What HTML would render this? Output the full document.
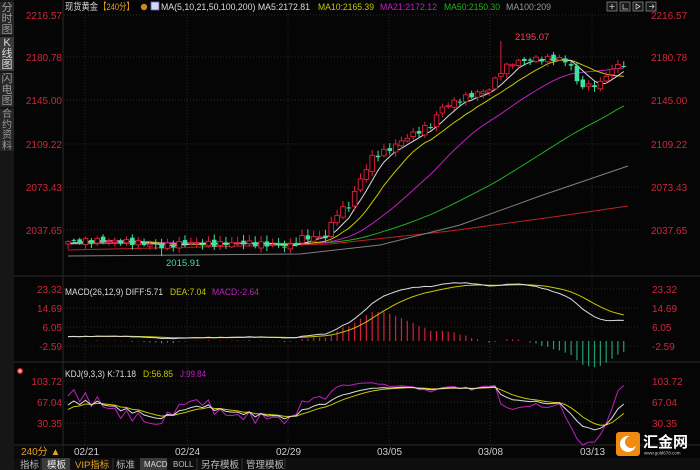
<!DOCTYPE html>
<html><head><meta charset="utf-8">
<style>
*{margin:0;padding:0;box-sizing:border-box}
body{width:700px;height:470px;background:#050505;overflow:hidden;font-family:"Liberation Sans","Noto Sans CJK SC",sans-serif;position:relative}
#side{position:absolute;left:0;top:0;width:14px;height:470px;background:#161616}
.tab{position:absolute;left:0;width:14px;color:#9a9a9a;font-size:11px;line-height:11px;text-align:center;background:#262626}
svg{position:absolute;left:0;top:0}
</style></head><body>
<div id="side">
<div class="tab" style="top:2px;height:33px;padding-top:1px">分<br>时<br>图</div>
<div class="tab" style="top:37px;height:34px;background:#3a3a3a;color:#ddd;padding-top:1px">K<br>线<br>图</div>
<div class="tab" style="top:73px;height:34px;padding-top:1px">闪<br>电<br>图</div>
<div class="tab" style="top:109px;height:42px;padding-top:1px;font-size:10px;line-height:10.5px">合<br>约<br>资<br>料</div>
</div>
<svg id="s" width="700" height="470" xmlns="http://www.w3.org/2000/svg" font-family="Liberation Sans, Noto Sans CJK SC, sans-serif">
<g id="grid" stroke="#262626" stroke-dasharray="1,2"></g>
<line x1="14" y1="276" x2="700" y2="276" stroke="#2a2a2a"/>
<line x1="14" y1="362" x2="700" y2="362" stroke="#2a2a2a"/>
<line x1="14" y1="445" x2="700" y2="445" stroke="#2a2a2a"/>
<line x1="63" y1="0" x2="63" y2="457" stroke="#2a2a2a"/>
<g id="plot"></g>
<g font-size="10" fill="#d0263a" text-anchor="end">
<text x="62" y="19">2216.57</text><text x="62" y="61">2180.78</text><text x="62" y="104">2145.00</text><text x="62" y="148">2109.22</text><text x="62" y="191">2073.43</text><text x="62" y="234">2037.65</text>
<text x="62" y="293">23.32</text><text x="62" y="312">14.69</text><text x="62" y="331">6.05</text><text x="62" y="350">-2.59</text>
<text x="62" y="385">103.72</text><text x="62" y="406">67.04</text><text x="62" y="427">30.35</text>
</g>
<g font-size="10" fill="#d0263a">
<text x="651" y="19">2216.57</text><text x="651" y="61">2180.78</text><text x="651" y="104">2145.00</text><text x="651" y="148">2109.22</text><text x="651" y="191">2073.43</text><text x="651" y="234">2037.65</text>
<text x="652" y="293">23.32</text><text x="652" y="312">14.69</text><text x="652" y="331">6.05</text><text x="652" y="350">-2.59</text>
<text x="652" y="385">103.72</text><text x="652" y="406">67.04</text><text x="652" y="427">30.35</text>
</g>
<g font-size="9.5" lengthAdjust="spacingAndGlyphs">
<text x="65" y="10" fill="#ddd" textLength="33" lengthAdjust="spacingAndGlyphs">现货黄金</text><text x="99" y="10" fill="#e8a020" textLength="35" lengthAdjust="spacingAndGlyphs">【240分】</text>
<circle cx="144" cy="7" r="3.2" fill="#c88a20"/>
<rect x="151" y="2" width="8" height="8" fill="#d8d8f0" stroke="#6060c0" stroke-width="0.8"/>
<text x="161" y="10" fill="#ddd" textLength="149" lengthAdjust="spacingAndGlyphs">MA(5,10,21,50,100,200) MA5:2172.81</text>
<text x="318" y="10" fill="#c8c800" textLength="56" lengthAdjust="spacingAndGlyphs">MA10:2165.39</text>
<text x="380" y="10" fill="#c020c0" textLength="57" lengthAdjust="spacingAndGlyphs">MA21:2172.12</text>
<text x="444" y="10" fill="#20b020" textLength="56" lengthAdjust="spacingAndGlyphs">MA50:2150.30</text>
<text x="506" y="10" fill="#999" textLength="45" lengthAdjust="spacingAndGlyphs">MA100:209</text>
<text x="65" y="295" fill="#ddd" textLength="98" lengthAdjust="spacingAndGlyphs">MACD(26,12,9) DIFF:5.71</text>
<text x="170" y="295" fill="#c8c800" textLength="36" lengthAdjust="spacingAndGlyphs">DEA:7.04</text>
<text x="212" y="295" fill="#c020c0" textLength="47" lengthAdjust="spacingAndGlyphs">MACD:-2.64</text>
<text x="65" y="377" fill="#ddd" textLength="71" lengthAdjust="spacingAndGlyphs">KDJ(9,3,3) K:71.18</text>
<text x="143" y="377" fill="#c8c800" textLength="30" lengthAdjust="spacingAndGlyphs">D:56.85</text>
<text x="180" y="377" fill="#c020c0" textLength="26" lengthAdjust="spacingAndGlyphs">J:99.84</text>
</g>
<g fill="#1a1a1a" stroke="#888" stroke-width="0.8">
<rect x="607" y="2" width="10" height="9"/><rect x="620" y="2" width="10" height="9"/><rect x="633" y="2" width="10" height="9"/><rect x="646" y="2" width="10" height="9"/>
</g>
<g stroke="#ccc" stroke-width="0.8" fill="none"><path d="M612 4v5M609.5 6.5h5M623 4v5h5M636 4v5l4-2.5zM649 6.5h5l-2-2M654 6.5l-2 2"/></g>
<circle cx="20" cy="371" r="3" fill="#e02020"/><path d="M20 369v4M18 371h4" stroke="#fff" stroke-width="0.8"/>
<g font-size="10" fill="#ccc">
<text x="74" y="455">02/21</text><text x="175" y="455">02/24</text><text x="276" y="455">02/29</text><text x="377" y="455">03/05</text><text x="478" y="455">03/08</text><text x="580" y="455">03/13</text>
</g>
<rect x="14" y="446" width="49" height="11" fill="#0a0a0a"/>
<text x="21" y="455" font-size="10" fill="#e8a020">240分 ▲</text>
<rect x="14" y="458" width="686" height="12" fill="#0e0e0e"/>
<rect x="42" y="458" width="28" height="12" fill="#3c3c3c"/>
<rect x="140" y="458" width="27" height="12" fill="#3c3c3c"/>
<g font-size="9.5" fill="#bbb">
<text x="20" y="468">指标</text><text x="47" y="468" fill="#eee">模板</text><text x="75" y="468" fill="#e8a020">VIP指标</text><text x="116" y="468">标准</text><text x="144" y="467" font-size="8" fill="#ddd">MACD</text><text x="173" y="467" font-size="8">BOLL</text><text x="201" y="468">另存模板</text><text x="246" y="468">管理模板</text>
</g>
<g stroke="#333"><line x1="41" y1="458" x2="41" y2="470"/><line x1="113" y1="458" x2="113" y2="470"/><line x1="197" y1="458" x2="197" y2="470"/><line x1="242" y1="458" x2="242" y2="470"/><line x1="285" y1="458" x2="285" y2="470"/></g>
<rect x="616" y="432" width="24" height="24" rx="3" fill="#f08a10"/>
<circle cx="628" cy="444" r="8" fill="#fff"/><circle cx="631" cy="442" r="6" fill="#f08a10"/>
<text x="643" y="447" font-size="15" fill="#fff" font-weight="bold">汇金网</text>
<text x="644" y="454.5" font-size="4.5" fill="#ccc">www.gold678.com</text>
</svg>
<script>
var NS="http://www.w3.org/2000/svg",plot=document.getElementById('plot'),grid=document.getElementById('grid');
function el(t,a,p){var e=document.createElementNS(NS,t);for(var k in a)e.setAttribute(k,a[k]);(p||plot).appendChild(e);return e;}
[15,57,100,144,187,230,289,308,327,346,381,402,423].forEach(function(y){el('line',{x1:64,y1:y,x2:640,y2:y},grid)});
[85,187,288,389,490,592].forEach(function(x){el('line',{x1:x,y1:14,x2:x,y2:445},grid)});
var kp=[[0,2028],[6,2029],[12,2027],[16,2024],[20,2027],[25,2026],[30,2027],[35,2025],[38,2024],[40,2031],[44,2032],[46,2052],[48,2058],[50,2080],[52,2098],[55,2105],[58,2115],[62,2125],[64,2140],[68,2148],[72,2155],[74,2170],[76,2177],[80,2180],[84,2180],[86,2175],[87,2160],[89,2157],[91,2160],[93,2172],[95,2176]];
var N=96,cl=[];
for(var i=0;i<N;i++){for(var j=0;j<kp.length-1;j++){if(i>=kp[j][0]&&i<=kp[j+1][0]){var t=(i-kp[j][0])/(kp[j+1][0]-kp[j][0]);cl.push(kp[j][1]+t*(kp[j+1][1]-kp[j][1])+Math.sin(i*2.7)*2.2);break;}}}
function X(i){return 68+i*5.85}
function Y(p){return 15+(2216.57-p)*1.2017}
var op=[],hi=[],lo=[];
for(var i=0;i<N;i++){var o=i?cl[i-1]+Math.sin(i*1.3)*1.5:cl[0]-2;op.push(o);var h=Math.max(o,cl[i])+1+Math.abs(Math.sin(i*3.1))*4;var l=Math.min(o,cl[i])-1-Math.abs(Math.cos(i*2.3))*3;if(i==16)l=2015.9;if(i==74)h=2195;hi.push(h);lo.push(l);}
function ma(n){var r=[];for(var i=0;i<N;i++){var s=0;for(var k=0;k<n;k++){var q=i-k;s+=q>=0?cl[q]:2026;}r.push(s/n);}return r;}
function line(arr,col,f){var d='';arr.forEach(function(v,i){d+=(i?'L':'M')+X(i).toFixed(1)+' '+f(v).toFixed(1)});el('path',{d:d,stroke:col,fill:'none','stroke-width':1});}
el('path',{d:'M68 250 L200 247 L330 244 L450 231 L560 216 L628 206',stroke:'#c02020',fill:'none'});
el('path',{d:'M68 256 L300 254 L380 245 L460 225 L540 196 L628 166',stroke:'#808080',fill:'none'});
line(ma(50),'#20b020',Y);line(ma(21),'#c020c0',Y);line(ma(10),'#c8c800',Y);line(ma(5),'#dddddd',Y);
for(var i=0;i<N;i++){var up=cl[i]>=op[i],c=up?'#e0203a':'#40e0a0',x=X(i);
el('line',{x1:x,y1:Y(hi[i]),x2:x,y2:Y(lo[i]),stroke:c});
var t=Y(Math.max(op[i],cl[i])),b=Y(Math.min(op[i],cl[i]));
el('rect',{x:x-2.3,y:t,width:4.6,height:Math.max(b-t,1),fill:up?'#050505':c,stroke:c,'stroke-width':up?0.9:0});}
var tx=el('text',{x:515,y:40,'font-size':9.5,fill:'#ff4050'});tx.textContent='2195.07';
var tx2=el('text',{x:166,y:266,'font-size':9.5,fill:'#40e0a0'});tx2.textContent='2015.91';
var e12=cl[0],e26=cl[0],dea=0,DF=[],DE=[],H=[];
for(var i=0;i<N;i++){e12=e12+(cl[i]-e12)*2/13;e26=e26+(cl[i]-e26)*2/27;var d=e12-e26;dea=dea+(d-dea)*0.2;DF.push(d+2);DE.push(dea+2);H.push(2*(d-dea));}
function MY(v){return 341-v*2.2}
for(var i=0;i<N;i++){var c=H[i]>=0?'#d0203a':'#20a070';el('line',{x1:X(i),y1:341,x2:X(i),y2:Math.min(Math.max(MY(H[i]),312),368),stroke:c,'stroke-width':1.2});}
line(DE,'#c8c800',MY);line(DF,'#dddddd',MY);
var K=50,D=50,KA=[],DA=[],JA=[];
for(var i=0;i<N;i++){var h=-1e9,l=1e9;for(var k=Math.max(0,i-8);k<=i;k++){h=Math.max(h,hi[k]);l=Math.min(l,lo[k]);}var r=(cl[i]-l)/(h-l||1)*100;K=K*2/3+r/3;D=D*2/3+K/3;KA.push(K);DA.push(D);JA.push(3*K-2*D);}
function KY(v){return Math.min(Math.max(381+(103.72-v)*0.5725,378),445)}
line(JA,'#c020c0',KY);line(DA,'#c8c800',KY);line(KA,'#dddddd',KY);
</script>
</body></html>
